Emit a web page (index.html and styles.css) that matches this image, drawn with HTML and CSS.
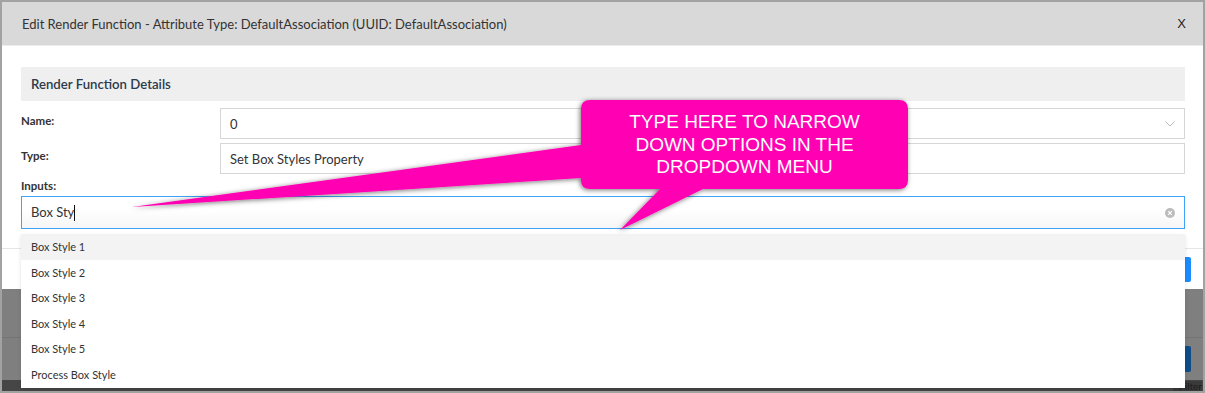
FILE: index.html
```html
<!DOCTYPE html>
<html lang="en">
<head>
    <meta charset="UTF-8">
    <meta name="viewport" content="width=device-width, initial-scale=1.0">
    <title>Edit Render Function</title>
    <link rel="stylesheet" href="styles.css">
</head>
<body>
    <div class="screen">
        <div class="modal">
            <div class="modal-header">
                <span class="modal-title">Edit Render Function - Attribute Type: DefaultAssociation (UUID: DefaultAssociation)</span>
                <span class="close">X</span>
            </div>

            <div class="modal-body">
                <div class="section-title">Render Function Details</div>

                <div class="form-row">
                    <div class="form-label">Name:</div>
                    <div class="field">
                        <span>0</span>
                        <svg class="chevron" width="10" height="6" viewBox="0 0 10 6"><path d="M0.5 0.5 L5 5 L9.5 0.5" fill="none" stroke="#bdbdbd" stroke-width="1"/></svg>
                    </div>
                </div>

                <div class="form-row">
                    <div class="form-label">Type:</div>
                    <div class="field">Set Box Styles Property</div>
                </div>

                <div class="form-label block">Inputs:</div>
                <div class="combo">
                    <div class="field focus">
                        <span>Box Sty<span class="caret"></span></span>
                        <svg class="clear" width="10" height="10" viewBox="0 0 10 10"><circle cx="5" cy="5" r="5" fill="#bcbcbc"/><path d="M3.2 3.2 L6.8 6.8 M6.8 3.2 L3.2 6.8" stroke="#fff" stroke-width="1.2"/></svg>
                    </div>
                    <ul class="options">
                        <li class="active">Box Style 1</li>
                        <li>Box Style 2</li>
                        <li>Box Style 3</li>
                        <li>Box Style 4</li>
                        <li>Box Style 5</li>
                        <li>Process Box Style</li>
                    </ul>
                </div>
            </div>

            <div class="modal-footer">
                <span class="btn btn-primary">Save</span>
            </div>
        </div>

        <!-- page behind the modal, darkened -->
        <div class="backdrop">
            <div class="bg-row"></div>
            <div class="bg-actions"><span class="btn btn-dark">Add</span></div>
            <div class="bg-bar"><span>Filter</span></div>
        </div>

        <svg class="callout-shape" width="1205" height="393" viewBox="0 0 1205 393">
            <defs>
                <filter id="glow" x="-10%" y="-20%" width="120%" height="140%">
                    <feDropShadow dx="-1" dy="1" stdDeviation="2.5" flood-color="#000" flood-opacity="0.55"/>
                </filter>
            </defs>
            <path filter="url(#glow)" fill="#ff00b2" d="M590 100 H899 Q908 100 908 109 V180 Q908 189 899 189 H703 L620 230 L660 189 H590 Q581 189 581 180 V178 L132 207 L581 145 V109 Q581 100 590 100 Z"/>
        </svg>
        <div class="callout-text">TYPE HERE TO NARROW<br>DOWN OPTIONS IN THE<br>DROPDOWN MENU</div>
    </div>
</body>
</html>
```

FILE: styles.css
```css
body {
    margin: 0;
    font-family: "Segoe UI", Lato, "Noto Sans", sans-serif;
    color: #333;
}
.screen {
    position: relative;
    width: 1205px;
    height: 393px;
    box-sizing: border-box;
    border: 2px solid #a2a2a2;
    background: #7f7f7f;
    overflow: hidden;
}
.modal {
    background: white;
}
.modal-header {
    height: 43px;
    background: #d9d9d9;
    border-bottom: 1px solid #ececec;
    display: flex;
    align-items: center;
    justify-content: space-between;
    padding: 0 17px 0 20px;
    font-size: 13px;
    color: #333;
}
.close {
    font-family: "Liberation Sans", Arial, sans-serif;
    font-size: 13px;
    color: #222;
}
.modal-body {
    padding: 21px 18px 19px 19px;
}
.section-title {
    height: 34px;
    background: #efefef;
    padding-left: 10px;
    display: flex;
    align-items: center;
    font-size: 13.2px;
    font-weight: 600;
    color: #2c3a4c;
}
.form-row {
    display: flex;
    align-items: flex-start;
    margin-top: 4px;
}
.section-title + .form-row {
    margin-top: 7px;
}
.form-label {
    width: 199px;
    flex-shrink: 0;
    padding-top: 5px;
    font-size: 11.5px;
    font-weight: 700;
    line-height: 15px;
    color: #333;
}
.form-label.block {
    width: auto;
    padding-top: 0;
    margin: 4px 0 3px;
}
.field {
    flex: 1;
    height: 31px;
    box-sizing: border-box;
    border: 1px solid #d6d6d6;
    padding: 0 9px 0 9px;
    display: flex;
    align-items: center;
    justify-content: space-between;
    font-size: 13px;
    color: #333;
    background: white;
}
.field.focus {
    height: 33px;
    border-color: #3ea3f6;
    background: linear-gradient(#fff 40%, #f6f6f6);
}
.caret {
    display: inline-block;
    width: 1px;
    height: 16px;
    background: #111;
    vertical-align: -4px;
}
.combo {
    position: relative;
}
.options {
    position: absolute;
    top: 38px;
    left: 0;
    right: 0;
    margin: 0;
    padding: 0;
    list-style: none;
    background: white;
    box-shadow: 0 2px 4px rgba(0,0,0,0.12);
    z-index: 2;
}
.options li {
    height: 25.6px;
    line-height: 25.6px;
    padding-left: 10px;
    font-size: 11px;
    color: #333;
}
.options li.active {
    background: #f3f3f3;
}
.modal-footer {
    height: 40px;
    border-top: 1px solid #e6e6e6;
    display: flex;
    align-items: center;
    justify-content: flex-end;
    padding-right: 12px;
}
.btn {
    display: inline-block;
    height: 25px;
    line-height: 25px;
    padding: 0 16px;
    border-radius: 2px;
    font-size: 12px;
    color: white;
}
.btn-primary {
    background: #1a8cff;
}
.backdrop {
    height: 102px;
    display: flex;
    flex-direction: column;
}
.bg-row {
    height: 48px;
    border-bottom: 1px solid #747474;
}
.bg-actions {
    height: 42px;
    display: flex;
    align-items: center;
    justify-content: flex-end;
    padding-right: 12px;
}
.btn-dark {
    height: 26px;
    background: #0e4c88;
}
.bg-bar {
    flex: 1;
    background: #464646;
    display: flex;
    justify-content: flex-end;
    align-items: center;
}
.bg-bar span {
    margin-right: 1px;
    font-size: 10px;
    line-height: 10px;
    color: #1e1e1e;
    background: #3a3a3a;
    padding-left: 6px;
}
.callout-shape {
    position: absolute;
    left: -2px;
    top: -2px;
    z-index: 3;
}
.callout-text {
    position: absolute;
    left: 579px;
    top: 109px;
    width: 327px;
    text-align: center;
    font-family: "Liberation Sans", Arial, sans-serif;
    font-size: 19px;
    line-height: 22.5px;
    color: white;
    z-index: 4;
}
```
